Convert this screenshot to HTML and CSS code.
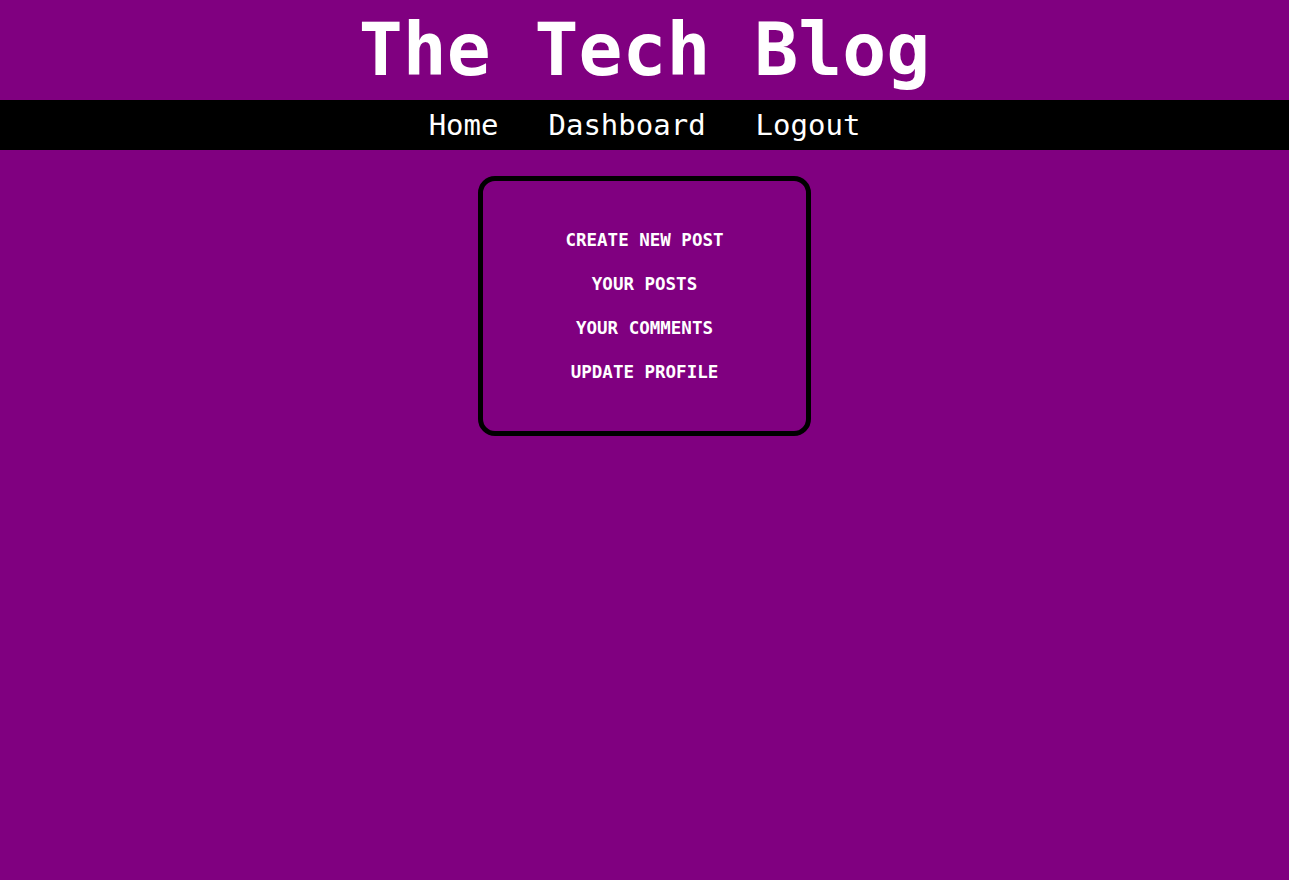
FILE: index.html
```html
<!DOCTYPE html>
<html lang="en">
<head>
<meta charset="utf-8">
<title>The Tech Blog</title>
<link rel="stylesheet" href="styles.css">
</head>
<body>
<header class="site-header">
  <h1 class="site-title">The Tech Blog</h1>
  <nav class="main-nav">
    <a href="#" class="nav-link">Home</a>
    <a href="#" class="nav-link">Dashboard</a>
    <a href="#" class="nav-link">Logout</a>
  </nav>
</header>
<main class="content">
  <section class="dash-box">
    <a href="#" class="dash-link">CREATE NEW POST</a>
    <a href="#" class="dash-link">YOUR POSTS</a>
    <a href="#" class="dash-link">YOUR COMMENTS</a>
    <a href="#" class="dash-link">UPDATE PROFILE</a>
  </section>
</main>
</body>
</html>
```

FILE: styles.css
```css
html, body {
  margin: 0;
  padding: 0;
  background: #800080;
  font-family: "DejaVu Sans Mono", "Liberation Mono", monospace;
  color: #ffffff;
  min-height: 100%;
}

.site-title {
  margin: 0;
  height: 100px;
  line-height: 100px;
  text-align: center;
  font-size: 73px;
  font-weight: bold;
}

.main-nav {
  height: 50px;
  background: #000000;
  display: flex;
  justify-content: center;
  align-items: center;
  gap: 50px;
}

.nav-link {
  color: #ffffff;
  text-decoration: none;
  font-size: 29px;
  line-height: 50px;
}

.content {
  padding-top: 26px;
}

.dash-box {
  box-sizing: border-box;
  width: 333px;
  height: 260px;
  margin: 0 auto;
  border: 5px solid #000000;
  border-radius: 17px;
  padding: 48px 0;
  display: flex;
  flex-direction: column;
  align-items: center;
  gap: 22px;
}

.dash-link {
  color: #ffffff;
  text-decoration: none;
  font-weight: bold;
  font-size: 17.5px;
  line-height: 22px;
}
```
